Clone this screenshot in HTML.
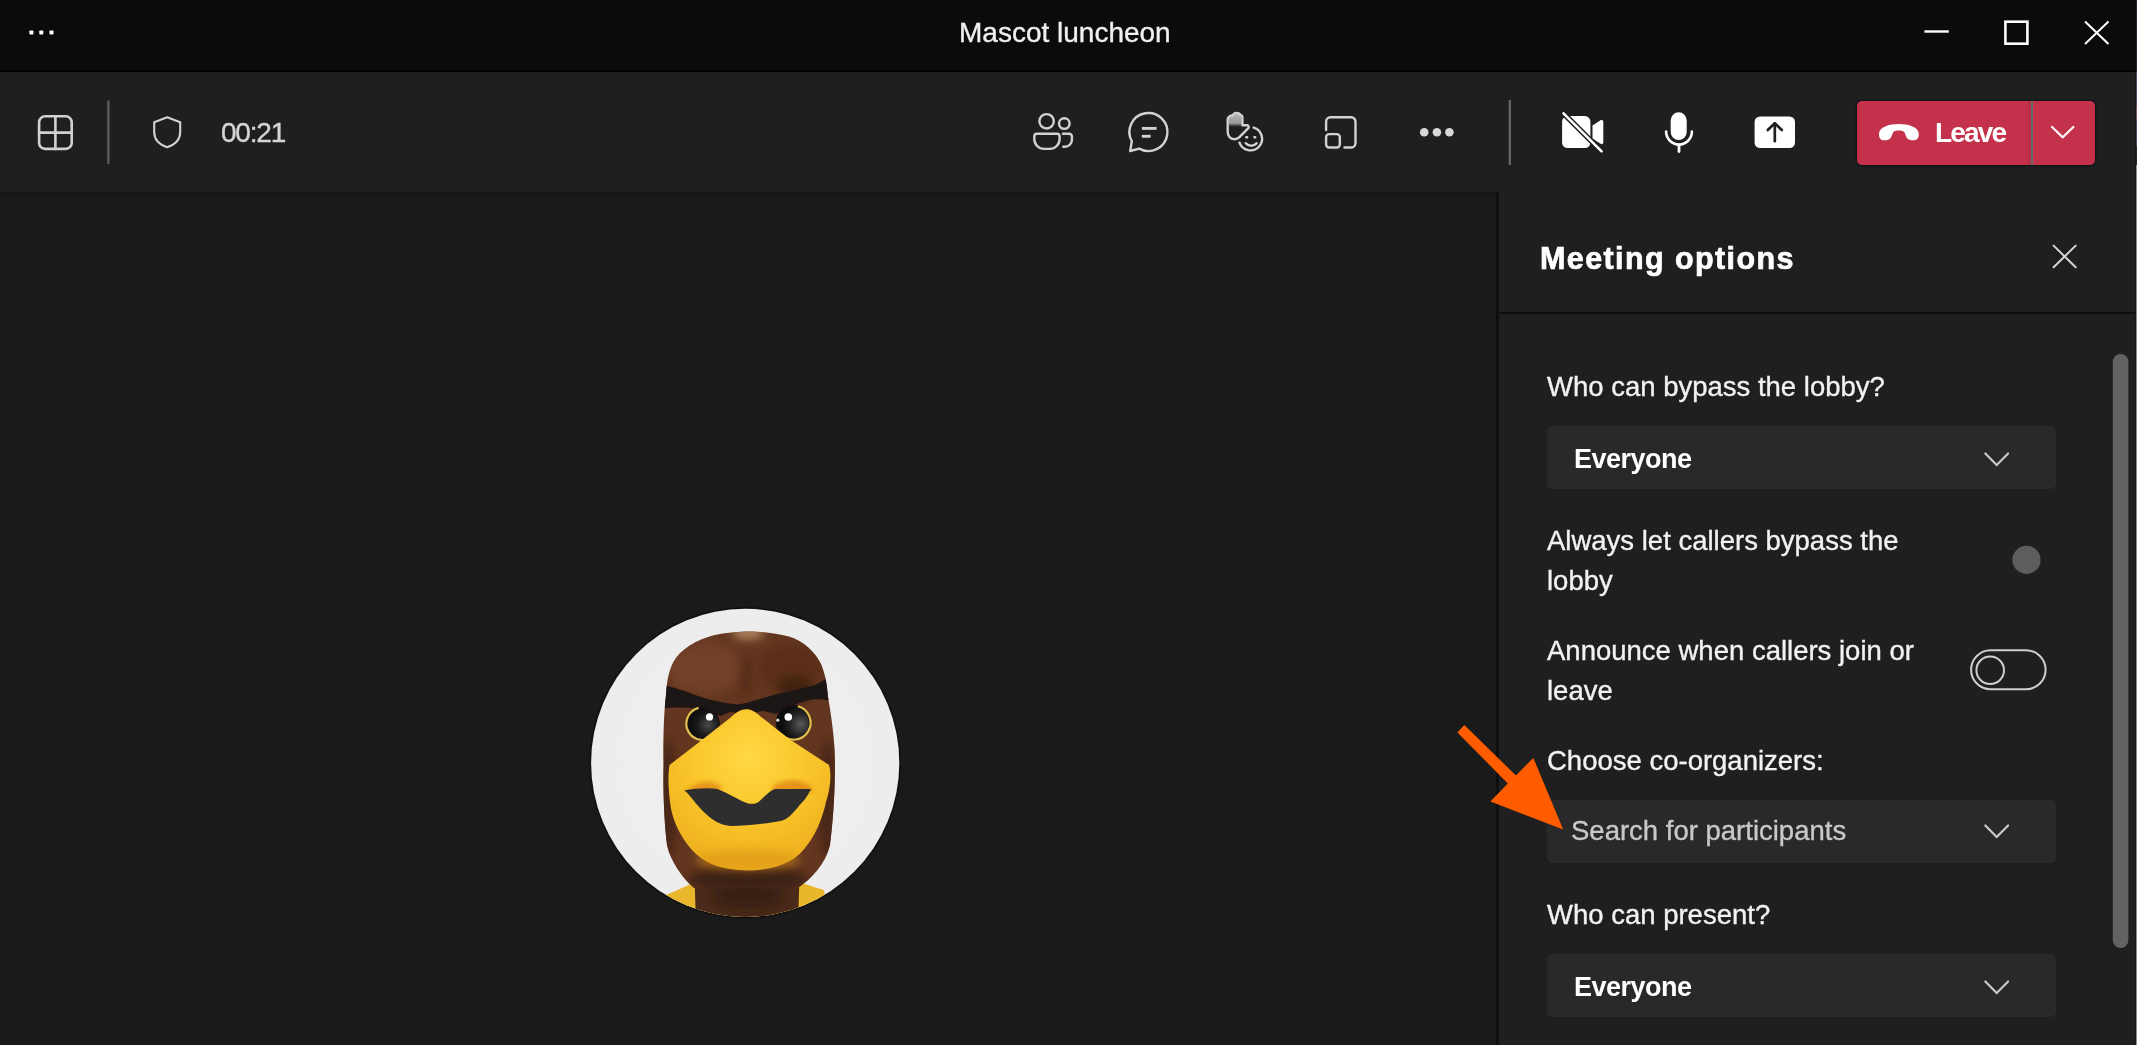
<!DOCTYPE html>
<html><head><meta charset="utf-8">
<style>
*{margin:0;padding:0;box-sizing:border-box}
html,body{width:2137px;height:1045px;overflow:hidden;background:#1a1a1a;font-family:"Liberation Sans",sans-serif}
.abs{position:absolute}
#title{left:0;top:0;width:2137px;height:70px;background:#0b0b0b}
#titleline{left:0;top:70px;width:2137px;height:2.5px;background:#000}
#toolbar{left:0;top:72px;width:2137px;height:120px;background:#1f1f1f}
#stage{left:0;top:192px;width:1497px;height:853px;background:#1a1a1a}
#panel{left:1499px;top:192px;width:638px;height:853px;background:#1f1f1f}
#pline{left:1496.3px;top:192px;width:2.4px;height:853px;background:#0f0f0f}
.t{position:absolute;white-space:nowrap;line-height:40px;color:#f2f2f2;-webkit-text-stroke:0.35px currentColor;will-change:transform}
.lbl{font-size:27.5px}
.dd{position:absolute;left:1547px;width:509px;height:63px;background:#292929;border-radius:5px}
</style></head><body>
<div class="abs" id="title"></div>
<div class="abs" id="titleline"></div>
<div class="abs" id="toolbar"></div>
<div class="abs" id="stage"></div>
<div class="abs" style="left:0;top:192px;width:1497px;height:2.5px;background:#151515"></div>
<div class="abs" id="pline"></div>
<div class="abs" id="panel"></div>

<!-- title bar -->
<svg class="abs" style="left:0;top:0" width="80" height="68">
  <rect x="29.4" y="30.5" width="4" height="4" rx="0.8" fill="#fff"/>
  <rect x="39.3" y="30.5" width="4" height="4" rx="0.8" fill="#fff"/>
  <rect x="49.5" y="30.5" width="4" height="4" rx="0.8" fill="#fff"/>
</svg>
<div class="t" style="left:959px;top:13px;font-size:28px;color:#f0f0f0">Mascot luncheon</div>
<svg class="abs" style="left:1900px;top:0" width="237" height="68">
  <line x1="1924.4" y1="31.5" x2="1948.8" y2="31.5" transform="translate(-1900,0)" stroke="#fff" stroke-width="2.4"/>
  <rect x="105.4" y="21.7" width="22" height="22" fill="none" stroke="#fff" stroke-width="2.6"/>
  <path d="M185 21.5 L208.5 44 M208.5 21.5 L185 44" stroke="#fff" stroke-width="2"/>
</svg>


<!-- toolbar icons (page coords) -->
<svg class="abs" style="left:0;top:0" width="2137" height="192" viewBox="0 0 2137 192">
  <g fill="none" stroke="#d2d2d2" stroke-width="2.6" stroke-linecap="round" stroke-linejoin="round">
    <rect x="39.1" y="116.3" width="32.6" height="32.6" rx="6"/>
    <line x1="55.4" y1="116.3" x2="55.4" y2="148.9"/>
    <line x1="39.1" y1="132.6" x2="71.7" y2="132.6"/>
  </g>
  <rect x="107.3" y="100.5" width="2.2" height="63.5" fill="#5f5f5f"/>
  <path d="M167.2,117.3 L154.2,122.3 V132 C154.2,139 159,144.5 167.2,147.3 C175.4,144.5 180.2,139 180.2,132 V122.3 Z" fill="none" stroke="#d2d2d2" stroke-width="2.1" stroke-linejoin="round"/>
  <!-- people -->
  <g fill="none" stroke="#d2d2d2" stroke-width="2.4" stroke-linecap="round" stroke-linejoin="round">
    <circle cx="1046.6" cy="121.3" r="7.2"/>
    <circle cx="1064.3" cy="123.6" r="5.3"/>
    <path d="M1037,133.8 H1057 a2.6,2.6 0 0 1 2.6,2.6 V139 a9.9,9.9 0 0 1 -9.9,9.9 h-5.5 a9.9,9.9 0 0 1 -9.9,-9.9 V136.4 a2.6,2.6 0 0 1 2.6,-2.6 Z"/>
    <path d="M1063,133.8 H1069.3 a2.6,2.6 0 0 1 2.6,2.6 V139.8 a7,7 0 0 1 -7,7 h-1.6"/>
  </g>
  <!-- chat -->
  <g fill="none" stroke="#d2d2d2" stroke-width="2.4" stroke-linecap="round" stroke-linejoin="round">
    <path d="M1131.8,141.2 A19,19 0 1 1 1139.2,148.6 L1130.2,151 Z"/>
    <line x1="1141.8" y1="128.4" x2="1156.6" y2="128.4" stroke-width="2.9" stroke-linecap="butt"/>
    <line x1="1141.8" y1="136.3" x2="1150.6" y2="136.3" stroke-width="2.9" stroke-linecap="butt"/>
  </g>
  <!-- react -->
  <defs><linearGradient id="fg" x1="0" y1="0" x2="0" y2="1"><stop offset="0" stop-color="#b4b4b4"/><stop offset="0.75" stop-color="#9a9a9a"/><stop offset="1" stop-color="#5a5a5a" stop-opacity="0.3"/></linearGradient></defs>
  <path d="M1229,118 Q1230,116 1232.8,115.6 Q1234,113.8 1236.7,113.8 Q1239.5,113.8 1240.6,115.6 Q1241.2,116.5 1241.2,118 V126.5 H1229 Z" fill="url(#fg)"/>
  <g fill="none" stroke="#d2d2d2" stroke-width="2.4" stroke-linecap="round" stroke-linejoin="round">
    <path d="M1242.4,125.2 V118 Q1242.4,115.3 1240.6,115.2 Q1239.6,113 1236.7,113 Q1233.8,113 1232.8,115.2 Q1229.8,115.3 1228.8,117 Q1227.7,117.8 1227.7,119.5 V131.5 C1227.7,136.5 1230.5,139.2 1234.5,139.2 C1236.8,139.2 1238.2,138.4 1239.4,137.2 L1248.3,128.2 C1249.3,127 1248.5,125.3 1247,125.3 H1242.4"/>
    <path d="M1253.6,127.6 A11.6,11.6 0 1 1 1239.5,142.6"/>
    <path d="M1245.8,143.2 C1248.6,146.6 1253.8,146.6 1256.6,143.2" stroke-width="2.5"/>
  </g>
  <rect x="1245.1" y="136.1" width="3.2" height="2.3" rx="1" fill="#d2d2d2"/>
  <rect x="1253.2" y="136.1" width="3.2" height="2.3" rx="1" fill="#d2d2d2"/>
  <!-- layout -->
  <g fill="none" stroke="#d2d2d2" stroke-width="2.4" stroke-linecap="round" stroke-linejoin="round">
    <path d="M1326.1,130 V121.5 a4.2,4.2 0 0 1 4.2,-4.2 H1351.3 a4.2,4.2 0 0 1 4.2,4.2 V143.3 a4.2,4.2 0 0 1 -4.2,4.2 H1344.5"/>
    <rect x="1326.1" y="134.1" width="13.7" height="13.4" rx="3"/>
  </g>
  <!-- more -->
  <circle cx="1424.2" cy="132.3" r="4.3" fill="#d8d8d8"/>
  <circle cx="1436.9" cy="132.3" r="4.3" fill="#d8d8d8"/>
  <circle cx="1449.4" cy="132.3" r="4.3" fill="#d8d8d8"/>
  <rect x="1508.7" y="100" width="2.3" height="65" fill="#666"/>
  <!-- camera off -->
  <rect x="1562.1" y="116.1" width="28.3" height="31.9" rx="5.5" fill="#fff"/>
  <path d="M1592.5,125.5 L1600.5,120.3 C1602,119.4 1603.3,120.2 1603.3,121.8 V142.3 C1603.3,143.9 1602,144.7 1600.5,143.8 L1592.5,138.6 Z" fill="#fff"/>
  <line x1="1562.6" y1="112.5" x2="1602.3" y2="152.1" stroke="#1f1f1f" stroke-width="5.4"/>
  <line x1="1563.5" y1="113.4" x2="1601.6" y2="151.4" stroke="#fff" stroke-width="2.6" stroke-linecap="round"/>
  <!-- mic -->
  <rect x="1670.7" y="112.3" width="16" height="27.8" rx="8" fill="#fff"/>
  <path d="M1666.1,131.6 A12.9,12.9 0 0 0 1691.9,131.6" fill="none" stroke="#fff" stroke-width="2.6" stroke-linecap="round"/>
  <line x1="1679" y1="144.8" x2="1679" y2="151.5" stroke="#fff" stroke-width="2.8" stroke-linecap="round"/>
  <!-- share -->
  <rect x="1754.6" y="116.5" width="40.4" height="31.6" rx="5.5" fill="#fff"/>
  <g fill="none" stroke="#1f1f1f" stroke-width="2.7" stroke-linecap="round" stroke-linejoin="round">
    <line x1="1774.8" y1="123.5" x2="1774.8" y2="141.2"/>
    <path d="M1767.8,130 L1774.8,123.3 L1781.8,130"/>
  </g>
</svg>
<div class="t" style="left:221px;top:113px;font-size:28px;letter-spacing:-1.2px;color:#d6d6d6">00:21</div>
<!-- leave button -->
<div class="abs" style="left:1857px;top:100.5px;width:238px;height:64px;background:#c4314b;border-radius:5px;box-shadow:0 0 2px 1px rgba(0,0,0,0.5)"></div>
<div class="abs" style="left:2026px;top:100.5px;width:5px;height:64px;background:linear-gradient(90deg,rgba(0,0,0,0),rgba(0,0,0,0.08))"></div>
<div class="abs" style="left:2030.6px;top:100.5px;width:2.2px;height:64px;background:#6b6b6b"></div>
<svg class="abs" style="left:0;top:0" width="2137" height="192" viewBox="0 0 2137 192">
  <path d="M1879,134 C1879,127 1889,124 1898.7,124 C1908.5,124 1918.8,127 1918.8,134 C1918.8,138.5 1917,140.3 1913,140.3 C1908.5,140.3 1906.6,138.5 1905.6,135 L1904.6,132.6 C1903.6,131 1901.5,130.6 1898.7,130.6 C1896,130.6 1894,131 1893,132.6 L1892,135 C1891,138.5 1889,140.3 1884.6,140.3 C1880.6,140.3 1879,138.5 1879,134 Z" fill="#fff"/>
  <path d="M2052,127 L2062.7,137.2 L2073.4,127" fill="none" stroke="#fff" stroke-width="2.2" stroke-linecap="round" stroke-linejoin="miter"/>
</svg>
<div class="t" style="left:1935px;top:113px;font-size:28px;letter-spacing:-1.8px;font-weight:700;color:#fff;-webkit-text-stroke:0">Leave</div>


<!-- mascot avatar -->
<svg class="abs" style="left:585px;top:600px" width="320" height="325" viewBox="585 600 320 325">
  <defs>
    <clipPath id="cc"><circle cx="745.2" cy="762.9" r="154.1"/></clipPath>
    <clipPath id="hc"><path d="M663.6,763.6 C663,735 664,712 666,695 C667,680 669,668 676,658 C686,645 703,637 720,634 C733,632 744,631.5 750.5,631.5 C760,631.5 776,633 789,636.5 C804,641 815,652 821,664 C826,676 827,686 828,697 C832,720 835,742 835,764 C835,800 832,830 830,845 C825,865 812,878 798,888 L694,888 C682,878 670,860 667,845 C664,820 663,790 663.6,763.6 Z"/></clipPath>
    <radialGradient id="bgg" cx="0.5" cy="0.5" r="0.5">
      <stop offset="0" stop-color="#efefef"/><stop offset="1" stop-color="#ededed"/>
    </radialGradient>
    <radialGradient id="yel" cx="0.5" cy="0.3" r="0.7">
      <stop offset="0" stop-color="#ffd844"/><stop offset="0.5" stop-color="#fac62b"/><stop offset="1" stop-color="#eeb01e"/>
    </radialGradient>
    <radialGradient id="eyeg" cx="0.65" cy="0.55" r="0.6">
      <stop offset="0" stop-color="#4a4a4a"/><stop offset="0.6" stop-color="#1a1a1a"/><stop offset="1" stop-color="#0c0c0c"/>
    </radialGradient>
    <radialGradient id="eyeg2" cx="0.75" cy="0.55" r="0.6">
      <stop offset="0" stop-color="#5a5a5a"/><stop offset="0.6" stop-color="#222"/><stop offset="1" stop-color="#0c0c0c"/>
    </radialGradient>
    <filter id="bl2" x="-20%" y="-20%" width="140%" height="140%"><feGaussianBlur stdDeviation="2"/></filter>
    <filter id="bl4" x="-50%" y="-50%" width="200%" height="200%"><feGaussianBlur stdDeviation="5"/></filter>
    <filter id="bl1" x="-50%" y="-50%" width="200%" height="200%"><feGaussianBlur stdDeviation="0.7"/></filter>
  </defs>
  <circle cx="745.2" cy="762.9" r="155" fill="none" stroke="#0f0f0f" stroke-width="1.6" opacity="0.8"/>
  <g clip-path="url(#cc)">
    <rect x="585" y="600" width="320" height="325" fill="url(#bgg)"/>
    <!-- shirt -->
    <path d="M666,895 L700,880 L792,880 L824,890 L830,925 L660,925 Z" fill="#e9b62c"/>
    <!-- neck -->
    <path d="M694,860 L800,860 L798,925 L696,925 Z" fill="#4a2a18"/>
    <g filter="url(#bl4)"><ellipse cx="748" cy="895" rx="35" ry="14" fill="#2e1a10" opacity="0.7"/></g>
    <!-- head -->
    <g clip-path="url(#hc)">
      <rect x="655" y="625" width="190" height="270" fill="#633620"/>
      <g filter="url(#bl4)">
        <ellipse cx="705" cy="668" rx="38" ry="26" fill="#74412a" opacity="0.9"/>
        <ellipse cx="790" cy="668" rx="32" ry="22" fill="#5a2f1a" opacity="0.9"/>
        <ellipse cx="795" cy="688" rx="18" ry="12" fill="#3a1d0e" opacity="0.8"/>
        <ellipse cx="748" cy="633" rx="16" ry="6" fill="#b48a62"/>
        <ellipse cx="745" cy="675" rx="5" ry="20" fill="#4a2313" opacity="0.7"/>
        <ellipse cx="668" cy="800" rx="10" ry="60" fill="#4a2818"/>
        <ellipse cx="828" cy="800" rx="10" ry="60" fill="#4a2818"/>
        <ellipse cx="748" cy="880" rx="60" ry="14" fill="#3e2214"/>
      </g>
      <!-- brow band -->
      <path d="M660,684 C672,687 682,690 690,693 C705,699 722,703 737,704.5 L746,703 L760,699 C775,694 795,690 812,686 C818,684 824,680 830,676 L832,701 C825,699 818,699 812,699.5 C800,702 790,706 776,714 L763,711 L746,714 L730,712 L721,716 C706,709 690,707 676,707.5 L660,708 Z" fill="#1d1613" filter="url(#bl1)"/>
    </g>
    <!-- eyes -->
    <circle cx="702.8" cy="723.6" r="17" fill="#17120f"/>
    <circle cx="703.4" cy="723.4" r="15.2" fill="url(#eyeg)"/>
    <path d="M714.3,735.1 A16.3,16.3 0 1 1 698.6,707.9" fill="none" stroke="#e2c050" stroke-width="2.2"/>
    <circle cx="793.5" cy="722.6" r="17.8" fill="#17120f"/>
    <circle cx="792.8" cy="722.6" r="15.9" fill="url(#eyeg2)"/>
    <path d="M797.9,706.2 A17,17 0 1 1 781.5,734.6" fill="none" stroke="#e2c050" stroke-width="2.2"/>
    <circle cx="709.5" cy="716.9" r="3.6" fill="#fff" filter="url(#bl1)"/>
    <circle cx="788.3" cy="717" r="3.8" fill="#fff" filter="url(#bl1)"/>
    <circle cx="777.8" cy="720.2" r="1.6" fill="#ddd" filter="url(#bl1)"/>
    <!-- yellow face -->
    <path d="M746,709.2 C750,709.2 755,711 760,716 L789.2,738.9 L829,765 C832,775 830,790 826,802 C822,820 815,836 805,848 C795,862 775,870 748,870.5 C722,870 705,864 692,850 C680,836 672,820 670,802 C668,785 668,775 669.5,765 L694.5,745.8 L730,718 C736,712 741,709.2 746,709.2 Z" fill="url(#yel)"/>
    <!-- chin shade -->
    <ellipse cx="748" cy="860" rx="52" ry="10" fill="#dc9418" opacity="0.6" filter="url(#bl4)"/>
    <!-- upper lip shade -->
    <path d="M688,790 C696,781 712,779 722,787 L720,791 L686,792 Z" fill="#e28a18" opacity="0.85" filter="url(#bl2)"/>
    <path d="M772,787 C785,778 802,778 812,788 L813,792 L772,792 Z" fill="#e28a18" opacity="0.85" filter="url(#bl2)"/>
    <!-- mouth -->
    <path d="M684.2,790.5 C695,788.5 708,787.5 717.4,789 C728,793 740,801 748,803.5 C752,804.2 756,803.8 758.5,802 C764,797 769,791 775,789 L811.1,789 C807,797 803,802 799.7,805 C792,815 786,820 780.4,821 C765,824 745,826 730.8,826 C722,825 716,822 712,819 C704,813 698,806 694,801 C690,796 687,792 684.2,790.5 Z" fill="#2e2e2e"/>
  </g>
</svg>

<!-- panel content -->
<div class="t" style="left:1539.5px;top:237.5px;font-size:30.5px;letter-spacing:1.4px;font-weight:700;color:#fff;-webkit-text-stroke:0.7px #fff">Meeting options</div>
<div class="abs" style="left:1499px;top:312px;width:638px;height:2px;background:#0e0e0e"></div>

<div class="t lbl" style="left:1547px;top:367px">Who can bypass the lobby?</div>
<div class="dd" style="top:426px"></div>
<div class="t" style="left:1573.5px;top:439px;font-size:27px;letter-spacing:-0.5px;font-weight:700;color:#fff;-webkit-text-stroke:0">Everyone</div>

<div class="t lbl" style="left:1547px;top:521px">Always let callers bypass the<br>lobby</div>
<div class="t lbl" style="left:1547px;top:631px">Announce when callers join or<br>leave</div>
<div class="t lbl" style="left:1547px;top:741px">Choose co-organizers:</div>
<div class="dd" style="top:800px"></div>
<div class="t lbl" style="left:1571px;top:811px;color:#c8c8c8">Search for participants</div>
<div class="t lbl" style="left:1547px;top:895px">Who can present?</div>
<div class="dd" style="top:954px"></div>
<div class="t" style="left:1573.5px;top:967px;font-size:27px;letter-spacing:-0.5px;font-weight:700;color:#fff;-webkit-text-stroke:0">Everyone</div>


<svg class="abs" style="left:0;top:0" width="2137" height="1045" viewBox="0 0 2137 1045">
  <path d="M2053.6,245.6 L2075.7,267.2 M2075.7,245.6 L2053.6,267.2" stroke="#d6d6d6" stroke-width="2" stroke-linecap="round"/>
  <g fill="none" stroke="#cdcdcd" stroke-width="2.1" stroke-linecap="round" stroke-linejoin="miter">
    <path d="M1985.3,453.4 L1996.7,465 L2008.1,453.4"/>
    <path d="M1985.3,825.4 L1996.7,837 L2008.1,825.4"/>
    <path d="M1985.3,981.4 L1996.7,993 L2008.1,981.4"/>
  </g>
  <circle cx="2026.5" cy="559.9" r="14.1" fill="#5d5d5d"/>
  <rect x="1971.1" y="650.2" width="74.5" height="39.1" rx="19.55" fill="none" stroke="#cfcfcf" stroke-width="2"/>
  <circle cx="1990.2" cy="670.2" r="13.8" fill="none" stroke="#cfcfcf" stroke-width="2"/>
  <rect x="2112.8" y="354" width="15.6" height="594" rx="7.8" fill="#626262"/>
  <rect x="2135" y="72" width="1" height="973" fill="#161616"/>
  <rect x="2136" y="0" width="1" height="72" fill="#2a2838"/>
  <rect x="2136" y="72" width="1" height="74" fill="#4a4a72"/>
  <rect x="2136" y="106" width="1" height="14" fill="#7a5a60"/>
  <rect x="2136" y="146" width="1" height="19" fill="#262626"/>
  <rect x="2136" y="165" width="1" height="880" fill="#8e8e8e"/>
  <polygon points="1464.3,725 1515.9,775.4 1533.3,757.9 1563.2,829.5 1490.4,801.5 1507.8,783.4 1457.4,732.4" fill="#ff5c00"/>
</svg>
</body></html>
